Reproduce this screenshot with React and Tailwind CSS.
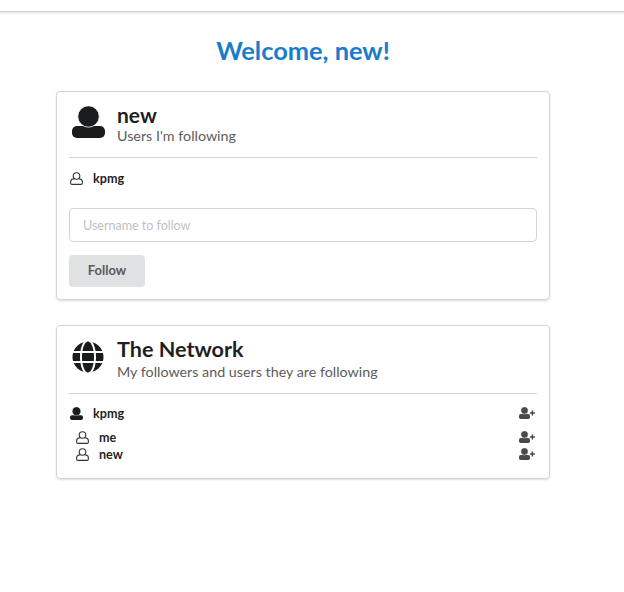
import React from "react";
import { FaGlobe } from "react-icons/fa";

function UserSolid({ className }) {
  return (
    <svg viewBox="0 0 33 32" preserveAspectRatio="none" className={className} fill="currentColor">
      <rect x="0" y="20" width="33" height="12" rx="5" />
      <circle cx="16.5" cy="10.5" r="10.7" stroke="#ffffff" strokeWidth="0.8" />
    </svg>
  );
}

function UserOutline({ className }) {
  return (
    <svg viewBox="0 0 13 13" className={className} fill="none" stroke="currentColor" strokeWidth="1.1">
      <circle cx="6.5" cy="4" r="3.3" />
      <path d="M4 7 H3 Q0.7 7.3 0.6 10 V11 Q0.6 12.4 2 12.4 H11 Q12.4 12.4 12.4 11 V10 Q12.3 7.3 10 7 H9" />
    </svg>
  );
}

function UserPlus({ className }) {
  return (
    <svg viewBox="0 0 16 12" className={className} fill="currentColor">
      <rect x="0" y="7" width="11" height="5" rx="1.8" />
      <circle cx="5.5" cy="3.5" r="3.6" stroke="#ffffff" strokeWidth="0.4" />
      <path d="M13.4 3.5 V8.5 M10.9 6 H15.9" stroke="currentColor" strokeWidth="1.5" />
    </svg>
  );
}

function Header({ icon, title, titleClass, sub }) {
  return (
    <div className="flex items-start border-b border-[#d4d4d5] pb-[12px]">
      <div className="w-[48px] shrink-0 pl-[3px]">{icon}</div>
      <div className="min-w-0">
        <div className={titleClass}>{title}</div>
        <div className="text-[14.3px] leading-[18px] text-[#5c5c5c]">{sub}</div>
      </div>
    </div>
  );
}

function Row({ icon, name, add, className = "" }) {
  return (
    <div className={"flex items-center h-[17px] text-[12.6px] font-bold text-[#1f1f1f] " + className}>
      {icon}
      <span className="leading-[17px]">{name}</span>
      {add && <UserPlus className="ml-auto mr-[2px] -mt-[1px] w-[16px] h-[12px] text-[#4a4a4a]" />}
    </div>
  );
}

const cardClass = "rounded-[4px] border border-[#d4d4d5] shadow-[0_1px_2px_rgba(34,36,38,0.15)] px-[12px]";

export default function App() {
  return (
    <div className="w-[624px] h-[592px] bg-white overflow-hidden font-['Lato','Open_Sans',sans-serif] text-[#212121]">
      <div className="h-[12px] bg-white border-b border-[#d4d4d5] shadow-[0_1px_2px_rgba(34,36,38,0.15)]" />
      <div className="ml-[56px] w-[494px]">
        <h1 className="mt-[22px] mb-[25px] h-[32px] text-center text-[25.4px] leading-[32px] font-bold text-[#1b7ccb]">Welcome, new!</h1>
        <div className="flex flex-col gap-[25px]">
          <div className={cardClass + " h-[209px] pt-[11px]"}>
            <Header
              icon={<UserSolid className="w-[33px] h-[32px] mt-[3px] text-[#1b1c1d]" />}
              title="new"
              titleClass="text-[21px] leading-[24px] font-bold text-[#1f1f1f]"
              sub="Users I'm following"
            />
            <Row
              className="mt-[12px]"
              icon={<span className="w-[24px] shrink-0 pl-[1px]"><UserOutline className="w-[13px] h-[13px] text-[#333]" /></span>}
              name="kpmg"
            />
            <input
              readOnly
              placeholder="Username to follow"
              className="mt-[21px] block w-full h-[34px] rounded-[4px] border border-[#d4d4d5] px-[13px] text-[12.5px] outline-none placeholder:text-[#bfbfbf]"
            />
            <button className="mt-[13px] block w-[76px] h-[32px] rounded-[4px] bg-[#e0e1e2] text-[13px] font-bold text-[#5a5a5a]">Follow</button>
          </div>
          <div className={cardClass + " h-[154px] pt-[10px]"}>
            <Header
              icon={<FaGlobe className="w-[32px] h-[32px] mt-[5px] text-[#1b1c1d]" />}
              title="The Network"
              titleClass="text-[21.6px] leading-[27px] font-bold text-[#1f1f1f]"
              sub="My followers and users they are following"
            />
            <Row
              className="mt-[11px]"
              icon={<span className="w-[24px] shrink-0 pl-[1px]"><UserSolid className="w-[13px] h-[13px] text-[#1b1c1d]" /></span>}
              name="kpmg"
              add
            />
            <div className="mt-[7px] pl-[7px]">
              <Row icon={<span className="w-[23px] shrink-0"><UserOutline className="w-[13px] h-[13px] text-[#333]" /></span>} name="me" add />
              <Row icon={<span className="w-[23px] shrink-0"><UserOutline className="w-[13px] h-[13px] text-[#333]" /></span>} name="new" add />
            </div>
          </div>
        </div>
      </div>
    </div>
  );
}
